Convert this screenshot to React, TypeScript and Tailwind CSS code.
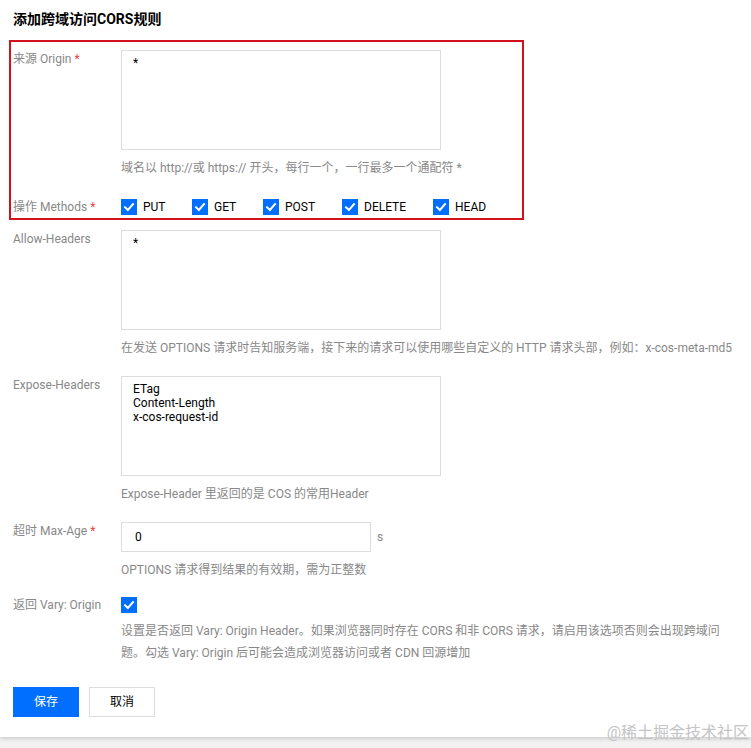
import type { ReactNode } from 'react'

const font = { fontFamily: 'Roboto, "Noto Sans CJK SC", sans-serif' }

function Check() {
  return (
    <span className="flex h-4 w-4 shrink-0 items-center justify-center bg-[#006eff]">
      <svg width="16" height="16" viewBox="0 0 16 16" fill="none">
        <path d="M4 8.3 L6.9 11 L12 5.2" stroke="white" strokeWidth="2" strokeLinecap="square" />
      </svg>
    </span>
  )
}

function Label({ text, required }: { text: string; required?: boolean }) {
  return (
    <div className="w-[108px] shrink-0 text-[12px] leading-[18px] text-[#888]">
      {text}
      {required && <span className="ml-[3px] text-[#e54545]">*</span>}
    </div>
  )
}

function Hint({ children, className = '' }: { children: ReactNode; className?: string }) {
  return <div className={`text-[12px] leading-[18px] text-[#888] whitespace-nowrap ${className}`}>{children}</div>
}

function Area({ lines }: { lines: string[] }) {
  return (
    <div className="h-[100px] w-[320px] border border-[#dddddd] px-[11px] py-[5px] text-[12px] leading-[14px] text-[#000]">
      {lines.map((l, i) => (
        <div key={i}>{l}</div>
      ))}
    </div>
  )
}

const methods = [
  { name: 'PUT', w: 'w-[71px]' },
  { name: 'GET', w: 'w-[71px]' },
  { name: 'POST', w: 'w-[79px]' },
  { name: 'DELETE', w: 'w-[91px]' },
  { name: 'HEAD', w: '' },
]

export default function App() {
  return (
    <div className="min-h-[748px] bg-[#f2f2f2]" style={font}>
      <div className="relative h-[737px] bg-white pl-[13px] shadow-[0_2px_4px_rgba(0,0,0,0.15)]">
        <div className="pt-[9px] text-[14px] font-bold leading-[20px] text-[#000]">添加跨域访问CORS规则</div>

        {/* Origin */}
        <div className="mt-[21px] flex">
          <Label text="来源 Origin" required />
          <div>
            <Area lines={['*']} />
            <Hint className="mt-[9px]">域名以 http://或 https:// 开头，每行一个，一行最多一个通配符 *</Hint>
          </div>
        </div>

        {/* Methods */}
        <div className="mt-[21px] flex items-center">
          <Label text="操作 Methods" required />
          <div className="flex items-center">
            {methods.map((m) => (
              <div key={m.name} className={`flex items-center ${m.w}`}>
                <Check />
                <span className="ml-[6px] text-[12px] leading-[18px] text-[#000]">{m.name}</span>
              </div>
            ))}
          </div>
        </div>

        {/* Allow-Headers */}
        <div className="mt-[14px] flex">
          <Label text="Allow-Headers" />
          <div>
            <Area lines={['*']} />
            <Hint className="mt-[9px]">
              在发送 OPTIONS 请求时告知服务端，接下来的请求可以使用哪些自定义的 HTTP 请求头部，例如：x-cos-meta-md5
            </Hint>
          </div>
        </div>

        {/* Expose-Headers */}
        <div className="mt-[19px] flex">
          <Label text="Expose-Headers" />
          <div>
            <Area lines={['ETag', 'Content-Length', 'x-cos-request-id']} />
            <Hint className="mt-[9px]">Expose-Header 里返回的是 COS 的常用Header</Hint>
          </div>
        </div>

        {/* Max-Age */}
        <div className="mt-[19px] flex">
          <Label text="超时 Max-Age" required />
          <div>
            <div className="flex items-center">
              <div className="flex h-[30px] w-[250px] items-center border border-[#dddddd] px-[13px] text-[12px] text-[#000]">
                0
              </div>
              <span className="ml-[6px] text-[12px] text-[#888]">s</span>
            </div>
            <Hint className="mt-[9px]">OPTIONS 请求得到结果的有效期，需为正整数</Hint>
          </div>
        </div>

        {/* Vary */}
        <div className="mt-[17px] flex">
          <Label text="返回 Vary: Origin" />
          <div>
            <div className="flex h-[18px] items-center">
              <Check />
            </div>
            <div className="mt-[6px] text-[12px] leading-[22px] text-[#888] whitespace-nowrap">
              <div>设置是否返回 Vary: Origin Header。如果浏览器同时存在 CORS 和非 CORS 请求，请启用该选项否则会出现跨域问</div>
              <div>题。勾选 Vary: Origin 后可能会造成浏览器访问或者 CDN 回源增加</div>
            </div>
          </div>
        </div>

        {/* Buttons */}
        <div className="mt-[23px] flex gap-[10px]">
          <button className="h-[30px] w-[66px] bg-[#006eff] text-[12px] text-white">保存</button>
          <button className="h-[30px] w-[66px] border border-[#dddddd] bg-white text-[12px] text-[#000]">取消</button>
        </div>

        {/* annotation box */}
        <div className="pointer-events-none absolute left-[9px] top-[40px] h-[180px] w-[515px] border-2 border-[#d4101b]" />
      </div>

      {/* watermark */}
      <div className="pointer-events-none absolute right-[2px] top-[723px] text-[16px] leading-[20px] text-[#c4c4c4]">
        @稀土掘金技术社区
      </div>
    </div>
  )
}
